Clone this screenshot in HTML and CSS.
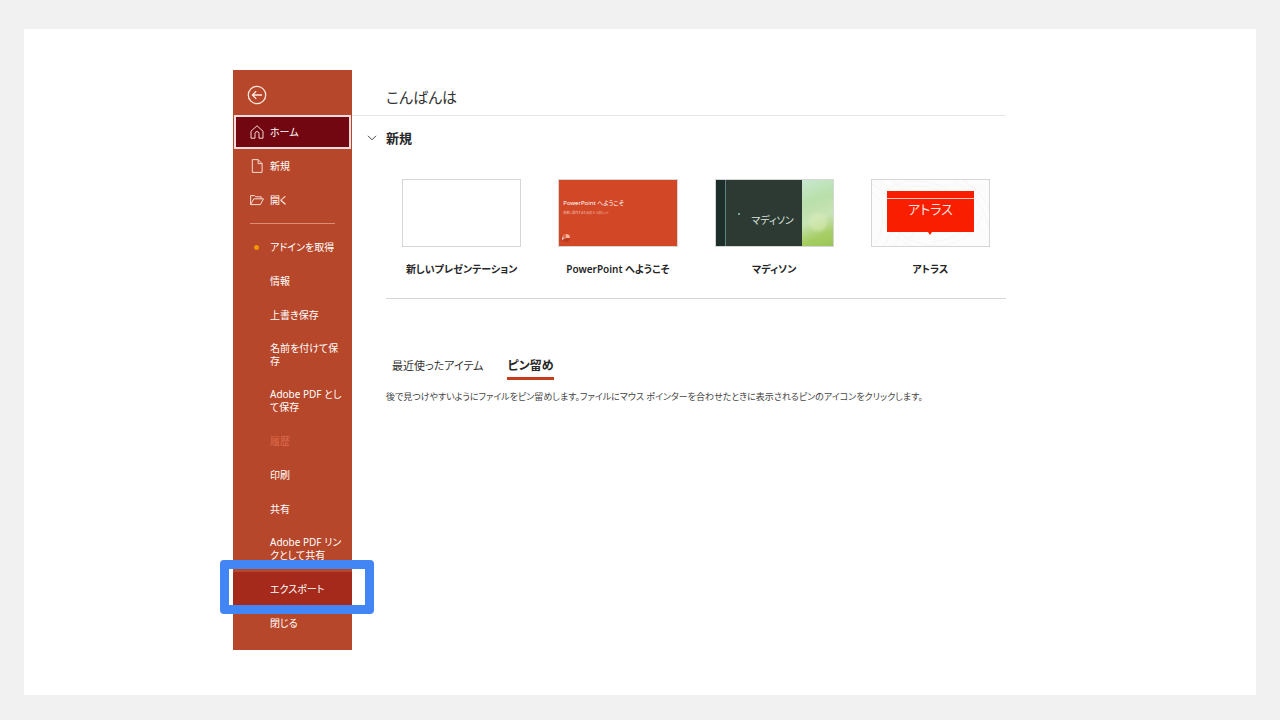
FILE: index.html
```html
<!DOCTYPE html>
<html lang="ja">
<head>
<meta charset="utf-8">
<meta name="viewport" content="width=device-width, initial-scale=1">
<title>PowerPoint - ホーム</title>
<link rel="stylesheet" href="styles.css">
</head>
<body>
<div class="slide">
  <div class="backstage">
    <nav class="sidebar" aria-label="ファイル">
      <button class="back" type="button" aria-label="戻る">
        <svg class="back-icon" viewBox="0 0 20 20"><circle cx="10" cy="10" r="8.7"/><path d="M15 10H5.5M9.2 6.2 5.4 10l3.8 3.8"/></svg>
      </button>
      <button class="item current" type="button" aria-current="page">
        <svg class="icon" viewBox="0 0 14 14"><path d="M1 6.2 7 .8l6 5.4v7H9V8.6a2 2 0 0 0-4 0v4.6H1z"/></svg>
        <span>ホーム</span>
      </button>
      <button class="item" type="button">
        <svg class="icon" viewBox="0 0 14 14"><path d="M2.3.6h5.8l4 4v8.8H2.3zM8.1.6v4h4"/></svg>
        <span>新規</span>
      </button>
      <button class="item" type="button">
        <svg class="icon" viewBox="0 0 14 14"><path d="M.6 11.6V2.6h4l1.2 1.2h5.4v2M.6 11.6 3.8 5.8h9.7l-3.2 5.8z"/></svg>
        <span>開く</span>
      </button>
      <hr class="rule">
      <button class="item" type="button"><i class="dot"></i><span>アドインを取得</span></button>
      <button class="item" type="button"><span>情報</span></button>
      <button class="item" type="button"><span>上書き保存</span></button>
      <button class="item" type="button"><span>名前を付けて保<br>存</span></button>
      <button class="item" type="button"><span>Adobe PDF とし<br>て保存</span></button>
      <button class="item" type="button" disabled><span>履歴</span></button>
      <button class="item" type="button"><span>印刷</span></button>
      <button class="item" type="button"><span>共有</span></button>
      <button class="item" type="button"><span>Adobe PDF リン<br>クとして共有</span></button>
      <button class="item export" type="button"><span>エクスポート</span></button>
      <button class="item" type="button"><span>閉じる</span></button>
    </nav>
    <main class="main">
      <h1 class="greeting">こんばんは</h1>
      <section class="new">
        <h2 class="new-heading">
          <button class="toggle" type="button" aria-expanded="true">
            <svg class="chevron" viewBox="0 0 10 6"><path d="M1 .8 5 4.8 9 .8"/></svg>新規
          </button>
        </h2>
        <div class="templates">
          <button class="template" type="button">
            <span class="thumb blank"></span>
            <span class="caption">新しいプレゼンテーション</span>
          </button>
          <button class="template" type="button">
            <span class="thumb welcome">
              <span class="welcome-title">PowerPoint へようこそ</span>
              <span class="welcome-sub">簡単に操作するための 5 つのヒント</span>
              <svg class="welcome-logo" viewBox="0 0 10 10"><path d="M5 1a4 4 0 0 1 4 4H5z" fill="#ffb199"/><path d="M5 5h4a4 4 0 0 1-7 2.7z" fill="#b83b20"/><path d="M5 1v4L2 7.7A4 4 0 0 1 5 1z" fill="#e87658"/><path d="M0 3.5h4v4H0z" fill="#b9341b"/><path d="M1.5 6.8V4.2h1a.8.8 0 0 1 0 1.6h-1" fill="none" stroke="#fff" stroke-width=".7"/></svg>
            </span>
            <span class="caption">PowerPoint へようこそ</span>
          </button>
          <button class="template" type="button">
            <span class="thumb madison"><span class="madison-title">マディソン</span><span class="madison-photo"></span></span>
            <span class="caption">マディソン</span>
          </button>
          <button class="template" type="button">
            <span class="thumb atlas">
              <svg class="swirl" viewBox="0 0 118 66"><g fill="none" stroke="#f5f5f5"><path d="M0 12C15 20 14 48 2 66M0 4C27 17 25 48 12 66M6 0c29 19 27 49 17 66M20 0C52 22 50 53 31 66M12 15C20-3 61-4 78 12M17 21C25 3 57 1 76 16M82 0c20 14 33 30 36 50M91 0c15 9 24 20 27 30M16 35c7 20 26 31 51 31M12 41c7 13 16 21 29 25M60 62c25-2 37-13 45-28M70 66c22-3 32-14 41-29"/></g></svg>
              <span class="atlas-box">アトラス</span>
            </span>
            <span class="caption">アトラス</span>
          </button>
        </div>
      </section>
      <section class="files">
        <div class="tabs" role="tablist">
          <button class="tab" type="button" role="tab" aria-selected="false">最近使ったアイテム</button>
          <button class="tab" type="button" role="tab" aria-selected="true">ピン留め</button>
        </div>
        <p class="hint">後で見つけやすいようにファイルをピン留めします。ファイルにマウス ポインターを合わせたときに表示されるピンのアイコンをクリックします。</p>
      </section>
    </main>
  </div>
</div>
</body>
</html>
```
FILE: styles.css
```css
* { box-sizing: border-box; }

body {
  margin: 0;
  min-height: 100vh;
  padding: 29px 24px 25px;
  display: flex;
  background: #f1f1f1;
  color: #333;
  font-family: "Noto Sans", "Noto Sans CJK JP", sans-serif;
  font-feature-settings: "palt";
  font-size: 10px;
}

button {
  margin: 0;
  padding: 0;
  border: 0;
  background: none;
  color: inherit;
  font: inherit;
  font-feature-settings: inherit;
  text-align: left;
}

svg { display: block; fill: none; stroke-width: 1; }

.slide {
  flex: 1;
  padding: 41px 250px 45px 209px;
  background: #fff;
}

.backstage { display: flex; height: 100%; }

/* Navigation */
.sidebar {
  flex: 0 0 119px;
  display: flex;
  flex-direction: column;
  padding-bottom: 10px;
  background: #b7472a;
  color: #fff;
}

.back { height: 45px; padding: 5px 0 0 14px; }
.back-icon { width: 20px; height: 20px; stroke: #ffe9e2; stroke-width: 1.3; }

.item {
  display: flex;
  align-items: center;
  position: relative;
  min-height: 34px;
  padding: 10px 0 10px 37px;
  font-size: 10px;
  line-height: 13px;
  white-space: nowrap;
}

.item:disabled { color: #dc6a4d; }

.current {
  border: 2px solid #f3dcdc;
  margin: 0 1px;
  padding: 8px 0 8px 34px;
  background: #730711;
}

.icon {
  position: absolute;
  left: 17px;
  width: 14px;
  height: 14px;
  stroke: #f7dcd4;
}

.current .icon { left: 14px; }

.dot {
  position: absolute;
  left: 21px;
  width: 5px;
  height: 5px;
  border-radius: 50%;
  background: #f59300;
}

.rule {
  width: 85px;
  margin: 6px 0 6px 17px;
  border: 0;
  border-top: 1px solid #dc8c75;
}

.export { background: #a62a1b; }

.export::after {
  content: "";
  position: absolute;
  inset: -12px -22px -8px -13px;
  border: 9px solid #4285f4;
  border-radius: 4px;
}

/* Content */
.main { flex: 1; min-width: 0; }

.greeting {
  margin: 0;
  padding: 14px 0 5px 34px;
  border-bottom: 1px solid #e6e6e6;
  font-size: 15px;
  font-weight: 400;
  line-height: 26px;
}

.new {
  margin-left: 34px;
  border-bottom: 1px solid #d4d4d4;
  padding-bottom: 21px;
}

.new-heading { margin: 0; padding: 12px 0 31px; font-size: 13px; line-height: 20px; }

.toggle {
  display: flex;
  align-items: center;
  gap: 9px;
  margin-left: -19px;
  font-weight: 700;
  color: #262626;
}

.chevron { width: 10px; height: 6px; stroke: #444; }

.templates {
  display: grid;
  grid-template-columns: repeat(4, minmax(0, 1fr));
  gap: 37px;
  padding: 0 16px;
}

.template { display: flex; flex-direction: column; align-items: center; }

.thumb {
  position: relative;
  display: block;
  width: 100%;
  height: 68px;
  border: 1px solid #d6d6d6;
  overflow: hidden;
}

.caption {
  margin-top: 14px;
  color: #262626;
  font-size: 10px;
  font-weight: 600;
  line-height: 16px;
  white-space: nowrap;
}

.welcome { padding: 17px 0 0 4px; background: #d24726; color: #fff; white-space: nowrap; }
.welcome-title { display: block; font-size: 6px; line-height: 12px; }
.welcome-sub { display: block; font-size: 3px; line-height: 8px; color: #f5c8bc; }
.welcome-logo { position: absolute; left: 2px; bottom: 3px; width: 10px; height: 10px; }

.madison {
  display: flex;
  justify-content: flex-end;
  background: linear-gradient(90deg, #1e2e2a 0 9px, #5f8583 9px 10px, #2c3a33 10px);
}

.madison::before {
  content: "";
  position: absolute;
  left: 22px;
  top: 33px;
  width: 2px;
  height: 2px;
  background: #76a09a;
}

.madison-title {
  padding: 30px 8px 0 0;
  color: #dce0dd;
  font-size: 10px;
  line-height: 20px;
}

.madison-photo {
  width: 31px;
  height: 100%;
  background:
    radial-gradient(circle at 16px 42px, #dcebb880 0 7px, transparent 11px),
    linear-gradient(160deg, #c7e8cf 0, #b9dfa9 32%, #c9e4b5 58%, #a5cd63 82%, #9bc659 100%);
}

.atlas { padding: 11px 15px 0; background: #fcfcfc; }
.swirl { position: absolute; inset: 0; width: 100%; height: 100%; }

.atlas-box {
  position: relative;
  display: block;
  height: 41px;
  padding-top: 8px;
  background: linear-gradient(#fa1e00 0 7px, #ffc8bd 7px 8px, #fa1e00 8px);
  color: #ffe5df;
  font-size: 13px;
  line-height: 20px;
  text-align: center;
}

.atlas-box::after {
  content: "";
  position: absolute;
  left: 50%;
  top: 100%;
  margin-left: -2px;
  border: 2px solid transparent;
  border-top: 3px solid #fa1e00;
}

.files { margin-left: 34px; padding-top: 54px; }

.tabs { display: flex; gap: 24px; padding-left: 6px; }

.tab { padding-top: 2px; border-bottom: 3px solid transparent; font-size: 11px; line-height: 22px; }

.tab[aria-selected="true"] { border-color: #c43e1c; color: #262626; font-size: 12px; font-weight: 700; }

.hint { margin: 9px 0 0; color: #444; font-size: 9px; line-height: 16px; }
```
